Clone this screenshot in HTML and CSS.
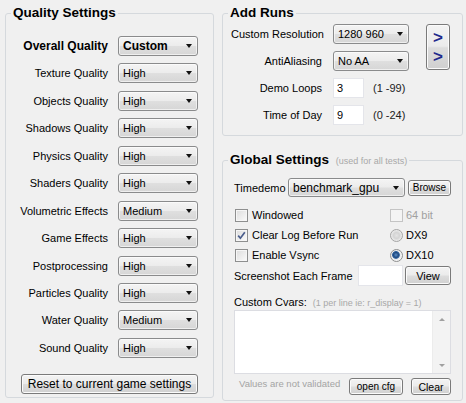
FILE: index.html
```html
<!DOCTYPE html>
<html>
<head>
<meta charset="utf-8">
<link rel="stylesheet" href="styles.css">
</head>
<body>
<div class="app">
  <fieldset class="group quality">
    <legend>Quality Settings</legend>
    <div class="qbody">
      <div class="qgrid">
        <span class="lbl strong">Overall Quality</span><div class="combo strong"><span>Custom</span><i class="arrow"></i></div>
        <span class="lbl">Texture Quality</span><div class="combo"><span>High</span><i class="arrow"></i></div>
        <span class="lbl">Objects Quality</span><div class="combo"><span>High</span><i class="arrow"></i></div>
        <span class="lbl">Shadows Quality</span><div class="combo"><span>High</span><i class="arrow"></i></div>
        <span class="lbl">Physics Quality</span><div class="combo"><span>High</span><i class="arrow"></i></div>
        <span class="lbl">Shaders Quality</span><div class="combo"><span>High</span><i class="arrow"></i></div>
        <span class="lbl">Volumetric Effects</span><div class="combo"><span>Medium</span><i class="arrow"></i></div>
        <span class="lbl">Game Effects</span><div class="combo"><span>High</span><i class="arrow"></i></div>
        <span class="lbl">Postprocessing</span><div class="combo"><span>High</span><i class="arrow"></i></div>
        <span class="lbl">Particles Quality</span><div class="combo"><span>High</span><i class="arrow"></i></div>
        <span class="lbl">Water Quality</span><div class="combo"><span>Medium</span><i class="arrow"></i></div>
        <span class="lbl">Sound Quality</span><div class="combo"><span>High</span><i class="arrow"></i></div>
      </div>
      <button class="btn reset">Reset to current game settings</button>
    </div>
  </fieldset>

  <div class="rightcol">
    <fieldset class="group runs">
      <legend>Add Runs</legend>
      <div class="rbody">
        <div class="rgrid">
          <span class="lbl">Custom Resolution</span><div class="combo rcombo"><span>1280 960</span><i class="arrow"></i></div>
          <span class="lbl">AntiAliasing</span><div class="combo rcombo"><span>No AA</span><i class="arrow"></i></div>
          <span class="lbl">Demo Loops</span><div class="fieldrow"><div class="field small">3</div><span class="range">(1 -99)</span></div>
          <span class="lbl">Time of Day</span><div class="fieldrow"><div class="field small">9</div><span class="range">(0 -24)</span></div>
        </div>
        <button class="btn addbtn"><span>&gt;</span><span>&gt;</span></button>
      </div>
    </fieldset>

    <fieldset class="group global">
      <legend>Global Settings <small class="hint">(used for all tests)</small></legend>
      <div class="gbody">
        <div class="timedemo">
          <span class="tlabel">Timedemo</span>
          <div class="combo tcombo"><span>benchmark_gpu</span><i class="arrow"></i></div>
          <button class="btn browse">Browse</button>
        </div>
        <div class="checks">
          <div class="opt"><i class="cb"></i><span>Windowed</span></div>
          <div class="opt disabled"><i class="cb off"></i><span>64 bit</span></div>
          <div class="opt"><i class="cb"><svg viewBox="0 0 11 11" width="11" height="11"><path d="M2.2 5.6 L4.4 8.2 L8.8 2.2" fill="none" stroke="#4a5d8c" stroke-width="1.7"/></svg></i><span>Clear Log Before Run</span></div>
          <div class="opt"><i class="rd"></i><span>DX9</span></div>
          <div class="opt"><i class="cb"></i><span>Enable Vsync</span></div>
          <div class="opt"><i class="rd on"></i><span>DX10</span></div>
        </div>
        <div class="shotrow">
          <span class="shotlabel">Screenshot Each Frame</span>
          <div class="field shot"></div>
          <button class="btn view">View</button>
        </div>
        <div class="cvlabel">Custom Cvars: <small class="hint">(1 per line ie: r_display = 1)</small></div>
        <div class="textarea">
          <div class="tarea"></div>
          <div class="scroll"><i class="up"></i><i class="down"></i></div>
        </div>
        <div class="bottomrow">
          <span class="note">Values are not validated</span>
          <button class="btn opencfg">open cfg</button>
          <button class="btn clear">Clear</button>
        </div>
      </div>
    </fieldset>
  </div>
</div>
</body>
</html>
```

FILE: styles.css
```css
html, body {
  margin: 0;
  padding: 0;
}
body {
  background: #f0f0f0;
  font-family: "Liberation Sans", Arial, sans-serif;
  font-size: 11px;
  color: #000;
}
.app {
  display: flex;
  align-items: flex-start;
  gap: 8px;
  padding: 5px 0 0 5px;
  width: 466px;
  height: 403px;
  box-sizing: border-box;
  overflow: hidden;
}
.group {
  margin: 0;
  padding: 0;
  border: 1px solid #d5d9dd;
  border-radius: 3px;
  box-sizing: border-box;
  min-inline-size: 0;
}
.group legend {
  padding: 0 2px;
  margin-left: 5px;
  font-weight: bold;
  font-size: 13.5px;
  line-height: 16px;
  color: #000;
}
.hint {
  font-weight: normal;
  font-size: 9px;
  color: #a8a8a8;
  margin-left: 3px;
}

/* quality */
.quality {
  width: 209px;
}
.qbody {
  padding: 15px 15px 3px 5px;
}
.qgrid {
  display: grid;
  grid-template-columns: 1fr 80px;
  column-gap: 10px;
  grid-auto-rows: 20px;
  row-gap: 7.45px;
}
.lbl {
  text-align: right;
  align-self: center;
  white-space: nowrap;
}
.strong {
  font-weight: bold;
  font-size: 12px;
}

/* combo */
.combo {
  display: flex;
  align-items: center;
  justify-content: space-between;
  height: 20px;
  box-sizing: border-box;
  border: 1px solid #8a8b8c;
  border-radius: 3px;
  background: linear-gradient(#f4f4f4 0%, #ececec 48%, #dfdfdf 52%, #d6d6d6 100%);
  box-shadow: inset 0 0 0 1px rgba(255,255,255,0.6);
  padding: 0 5px 0 4px;
  white-space: nowrap;
  overflow: hidden;
}
.arrow {
  display: block;
  width: 0;
  height: 0;
  border-left: 3.5px solid transparent;
  border-right: 3.5px solid transparent;
  border-top: 4px solid #111;
  flex: none;
}

/* buttons */
.btn {
  font-family: "Liberation Sans", Arial, sans-serif;
  font-size: 11px;
  color: #000;
  border: 1px solid #7a7a7a;
  border-radius: 3px;
  background: linear-gradient(#f3f3f3 0%, #ebebeb 48%, #dddddd 52%, #d0d0d0 100%);
  box-shadow: inset 0 0 0 1px #fbfbfb;
  padding: 0;
  margin: 0;
  box-sizing: border-box;
  white-space: nowrap;
}
.reset {
  display: block;
  margin: 16px 0 0 10px;
  width: 177px;
  height: 20px;
  font-size: 12px;
}

/* right column */
.rightcol {
  display: flex;
  flex-direction: column;
  width: 241px;
}
.runs {
  width: 241px;
}
.rbody {
  display: flex;
  align-items: flex-start;
  padding: 3px 0 10px 8px;
}
.rgrid {
  display: grid;
  grid-template-columns: 91px auto;
  column-gap: 11px;
  grid-auto-rows: 20px;
  row-gap: 7px;
}
.rcombo {
  width: 76px;
}
.fieldrow {
  display: flex;
  align-items: center;
  gap: 9px;
}
.field {
  background: #fff;
  border: 1px solid #e4e5ea;
  box-sizing: border-box;
  height: 20px;
  padding: 0 3px;
  line-height: 18px;
}
.small {
  width: 31px;
}
.range {
  color: #222;
}
.addbtn {
  margin-left: 17px;
  width: 24px;
  height: 46px;
  display: flex;
  flex-direction: column;
  align-items: center;
  justify-content: center;
  gap: 2px;
  font-size: 17px;
  font-weight: bold;
  line-height: 17px;
  color: #1f2a8c;
}

/* global */
.global {
  width: 241px;
  margin-top: 16px;
}
.gbody {
  padding: 9px 11px 5px 11px;
}
.timedemo {
  display: flex;
  align-items: center;
  height: 19px;
}
.tlabel {
  width: 54px;
  flex: none;
}
.tcombo {
  width: 117px;
  height: 19px;
  font-size: 12px;
}
.browse {
  margin-left: 3px;
  width: 43px;
  height: 16px;
  font-size: 10px;
}
.checks {
  margin-top: 8px;
  display: grid;
  grid-template-columns: 156px 1fr;
  grid-auto-rows: 20px;
}
.opt {
  display: flex;
  align-items: center;
  gap: 4px;
  padding-left: 1px;
  font-size: 11px;
  white-space: nowrap;
}
.opt:nth-child(even) {
  padding-left: 0;
  gap: 3px;
}
.disabled {
  color: #a0a0a0;
}
.cb {
  display: flex;
  align-items: center;
  justify-content: center;
  width: 13px;
  height: 13px;
  box-sizing: border-box;
  border: 1px solid #8e8f8f;
  background: linear-gradient(135deg, #dcdcdc, #fbfbfb);
  box-shadow: inset 0 0 0 1px #f6f6f6;
  flex: none;
}
.cb.off {
  border-color: #c4c4c4;
  background: #f4f4f4;
  box-shadow: none;
}
.rd {
  display: block;
  width: 13px;
  height: 13px;
  box-sizing: border-box;
  border: 1px solid #a5a5a5;
  border-radius: 50%;
  background: radial-gradient(circle at 50% 50%, #e4e4e4 0, #d4d4d4 3px, #f2f2f2 6px);
  flex: none;
}
.rd.on {
  border-color: #8e8f8f;
  background: radial-gradient(circle at 45% 45%, #5d8fc8 0, #1f4a80 2.5px, #3a6aa4 3.5px, #e8e8e8 4.2px, #f6f6f6 6px);
}
.shotrow {
  display: flex;
  align-items: center;
  height: 21px;
  font-size: 11px;
  white-space: nowrap;
}
.shotlabel {
  flex: 1;
}
.shot {
  width: 45px;
  height: 21px;
}
.view {
  margin-left: 2px;
  width: 46px;
  height: 19px;
  font-size: 11px;
}
.cvlabel {
  margin-top: 8px;
  height: 16px;
  line-height: 16px;
  font-size: 11px;
  white-space: nowrap;
}
.textarea {
  display: flex;
  height: 64px;
  border: 1px solid #dcdde2;
  box-sizing: border-box;
  background: #fff;
}
.tarea {
  flex: 1;
}
.scroll {
  width: 17px;
  background: #f3f3f3;
  border-left: 1px solid #ececec;
  display: flex;
  flex-direction: column;
  justify-content: space-between;
  align-items: center;
  padding: 7px 0 6px;
}
.up, .down {
  display: block;
  width: 0;
  height: 0;
  border-left: 3px solid transparent;
  border-right: 3px solid transparent;
}
.up {
  border-bottom: 3px solid #a0a0a0;
}
.down {
  border-top: 3px solid #a0a0a0;
}
.bottomrow {
  display: flex;
  align-items: flex-start;
  margin-top: 4px;
  height: 17px;
}
.note {
  margin-left: 5px;
  font-size: 9.5px;
  color: #a4a4a4;
  line-height: 12px;
}
.opencfg {
  margin-left: auto;
  width: 54px;
  height: 17px;
  font-size: 10px;
}
.clear {
  margin-left: 8px;
  width: 40px;
  height: 17px;
  font-size: 10.5px;
}
```
